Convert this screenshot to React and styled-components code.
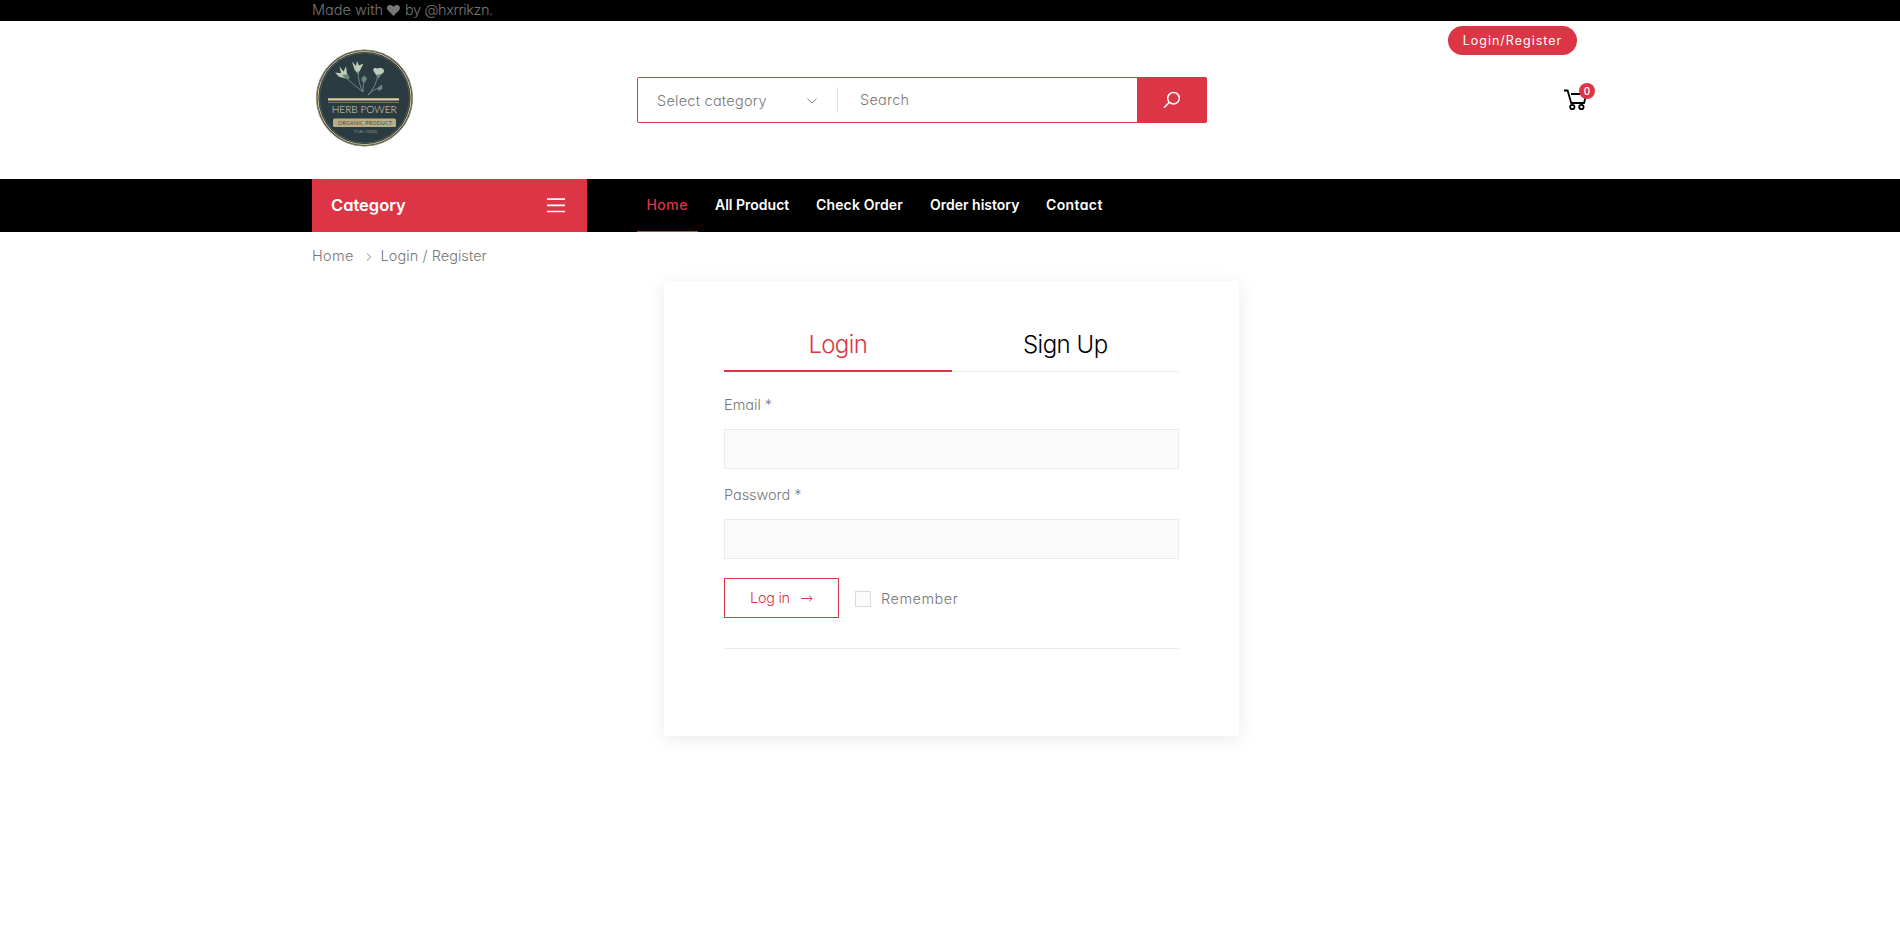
import React from "react";
import styled, { createGlobalStyle } from "styled-components";

const red = "#dc3545";

const GlobalStyle = createGlobalStyle`
  *, *::before, *::after { box-sizing: border-box; }
  body {
    margin: 0;
    background: #fff;
    color: #777;
    font: 300 14.5px/24px Inter, "Open Sans", sans-serif;
    font-feature-settings: "cv11", "ss03";
  }
  button, input { font: inherit; font-feature-settings: inherit; }
`;

const Page = styled.div`
  min-height: 100vh;
`;

const Label = styled.span`
  display: inline-block;
  white-space: nowrap;
  letter-spacing: ${(p) => p.$track || 0}px;
`;

const Container = styled.div`
  width: 1283px;
  height: 100%;
  margin-left: 312px;
  display: flex;
`;

const TopBar = styled.div`
  height: 21px;
  background: #000;
`;

const Credit = styled(Container)`
  align-items: center;
  line-height: 20px;
  padding-bottom: 1px;
  svg { margin: 0 5px 0 4px; }
`;

const Header = styled.header`
  height: 158px;
`;

const Logo = styled.svg`
  flex: none;
  width: 106px;
  height: 106px;
  margin-top: 24px;
`;

const SearchForm = styled.div`
  display: flex;
  flex: none;
  width: 570px;
  height: 46px;
  margin: 56px 0 0 219px;
  border: 1px solid ${red};
  border-radius: 2px;
`;

const Select = styled.div`
  display: flex;
  align-items: center;
  justify-content: space-between;
  width: 200px;
  height: 26px;
  margin-top: 9px;
  padding: 2px 20px 0 19px;
  border-right: 1px solid #e5e5e5;
`;

const SearchText = styled.div`
  flex: 1;
  padding: 10px 0 0 22px;
`;

const SearchButton = styled.button`
  display: grid;
  place-items: center;
  width: 70px;
  height: 46px;
  margin: -1px -1px 0 0;
  padding: 0;
  border: 0;
  border-radius: 0 2px 2px 0;
  background: ${red};
`;

const Account = styled.div`
  display: flex;
  flex-direction: column;
  align-items: flex-end;
  width: 147px;
  margin: 5px 0 0 241px;
`;

const Pill = styled.button`
  width: 129px;
  height: 29px;
  margin-right: 18px;
  padding: 0;
  border: 0;
  border-radius: 15px;
  background: ${red};
  color: #fff;
  font-size: 12.5px;
  font-weight: 400;
  line-height: 29px;
`;

const Cart = styled.div`
  position: relative;
  width: 31px;
  height: 28px;
  margin-top: 28px;
  svg { display: block; margin-top: 6px; }
`;

const Badge = styled.span`
  position: absolute;
  top: 0;
  right: 0;
  width: 16px;
  height: 16px;
  border-radius: 50%;
  background: ${red};
  color: #fff;
  font-size: 10px;
  font-weight: 500;
  line-height: 16px;
  text-align: center;
`;

const NavBar = styled.nav`
  height: 53px;
  background: #000;
`;

const Category = styled.div`
  display: flex;
  align-items: center;
  justify-content: space-between;
  width: 275px;
  height: 53px;
  margin-right: 50px;
  padding: 0 22px 0 19px;
  background: ${red};
  color: #fff;
  font-size: 16.5px;
  font-weight: 600;
  span { padding-bottom: 1px; }
`;

const NavItem = styled.div`
  width: ${(p) => p.$width}px;
  height: 53px;
  margin-right: 6px;
  padding-left: ${(p) => (p.$active ? 9.5 : 11)}px;
  border-bottom: 1px solid ${(p) => (p.$active ? red : "transparent")};
  color: ${(p) => (p.$active ? red : "#fff")};
  font-weight: ${(p) => (p.$active ? 500 : 600)};
  font-size: 14px;
  line-height: 52px;
`;

const Breadcrumb = styled(Container)`
  height: 49px;
  align-items: center;
  padding-bottom: 1px;
  svg { margin: 2px 9px 0 12px; }
`;

const Card = styled.main`
  width: 575px;
  height: 455px;
  margin-left: 664px;
  padding: 40px 60px 0;
  background: #fff;
  box-shadow: 0 3px 16px rgba(51, 51, 51, 0.1);
`;

const Tabs = styled.div`
  display: flex;
  height: 51px;
  border-bottom: 1px solid #ebebeb;
`;

const Tab = styled.div`
  flex: 1;
  height: 51px;
  border-bottom: ${(p) => (p.$active ? `2px solid ${red}` : "0")};
  color: ${(p) => (p.$active ? red : "#000")};
  font-size: 24px;
  font-weight: 350;
  line-height: 47px;
  text-align: center;
`;

const Field = styled.label`
  display: block;
  height: 90px;
  padding-top: 21px;
`;

const Input = styled.input`
  display: block;
  width: 100%;
  height: 40px;
  margin-top: 12px;
  border: 1px solid #ebebeb;
  background: #fafafa;
`;

const Actions = styled.div`
  display: flex;
  align-items: center;
  height: 71px;
  margin-top: 26px;
  padding-bottom: 31px;
  border-bottom: 1px solid #ebebeb;
`;

const LoginButton = styled.button`
  display: flex;
  align-items: center;
  width: 115px;
  height: 40px;
  padding: 0 0 0 25px;
  border: 1px solid ${red};
  background: transparent;
  color: ${red};
  svg { margin: 1px 0 0 11px; }
`;

const Remember = styled.label`
  display: flex;
  align-items: center;
  padding-top: 2px;
`;

const CheckBox = styled.span`
  width: 16px;
  height: 16px;
  margin: 0 10px 0 16px;
  border: 1px solid #dadada;
  background: #fafafa;
`;

const LogoArt = () => (
  <Logo viewBox="0 0 106 106">
    <circle cx="52.5" cy="53" r="48.1" fill="#2b3b42" stroke="#8f8b72" strokeWidth="1" />
    <circle cx="52.5" cy="53" r="46.6" fill="none" stroke="#d6c894" strokeWidth="1" />
    <circle cx="52.5" cy="53" r="45" fill="none" stroke="#686d60" strokeWidth="0.6" />
    <path
      d="M32 31Q42 40 51 47M46 25Q46 38 51 47M52 36Q51 42 51 47M66 29Q64 42 56 50M67 43Q61 44 56 50"
      fill="none"
      stroke="#7f9c90"
      strokeWidth="0.8"
    />
    <g fill="#bdcdb8">
      <path d="M23 27.5l6 .8-1.5-6.8 4 5 2.5-5.2 1 7.5 2 3-4 1.5-6-1.5z" />
      <path d="M40 16.5l4 4.5 1-5 2 4.5 4.5-2-3.5 7-2.5 3-3-4z" />
      <path d="M61 25l1.500-2.300 3 .8 3-.8 3 1.300.5 3-3.500 3-1 2-3.500-2z" />
    </g>
    <g fill="#668b7a">
      <path d="M30 30l6-1 2 4.500-4 .5zM44.500 27l3-1-1 4zM64 30l5-1-2.500 5zM49.500 33l3-2.500 2.500 3-2 4-3-1zM65 43l5-3.500 .5 4-3.500 2.500z" />
    </g>
    <path d="M16 54.4H87" stroke="#e1cd99" strokeWidth="2.2" />
    <path d="M16 57.4H87" stroke="#928d70" strokeWidth="0.8" />
    <text x="19.7" y="68" textLength="65" fontSize="10.2" fontFamily="Lato, sans-serif" fontWeight="300" fill="#e2d8b2">HERB POWER</text>
    <rect x="21" y="73.5" width="63" height="8.500" rx="1.5" fill="#b9af86" />
    <text x="26" y="79.6" textLength="54" fontSize="5.2" fontFamily="Lato, sans-serif" fontWeight="400" fill="#39443f">ORGANIC PRODUCT</text>
    <text x="42" y="87.5" textLength="23" fontSize="4" fontFamily="Lato, sans-serif" fill="#d0ccb0">THAI HERBS</text>
  </Logo>
);

const NAV = [
  ["Home", 61, 0.45],
  ["All Product", 95, 0],
  ["Check Order", 108, 0.14],
  ["Order history", 110, 0],
  ["Contact", 80, 0.38],
];

export default function App() {
  return (
    <Page>
      <GlobalStyle />
      <TopBar>
        <Credit>
          <Label>Made with</Label>
          <svg width="13" height="11" viewBox="0 0 13 11" fill="#777">
            <path d="M6.5 11L1.1 5.6C-.6 3.8-.2 1.4 1.4.5 3-.4 5 0 6.5 1.7 8 0 10-.4 11.6.5c1.6.9 2 3.3.3 5.1z" />
          </svg>
          <Label $track={-0.42}>by @hxrrikzn.</Label>
        </Credit>
      </TopBar>
      <Header>
        <Container>
          <LogoArt />
          <SearchForm>
            <Select>
              <Label $track={0.24}>Select category</Label>
              <svg width="10" height="6" viewBox="0 0 10 6" fill="none" stroke="#888"><path d="M.4.5L5 5 9.6.5" /></svg>
            </Select>
            <SearchText><Label $track={0.25}>Search</Label></SearchText>
            <SearchButton aria-label="Search">
              <svg width="18" height="18" viewBox="0 0 18 18" fill="none" stroke="#fff" strokeWidth="1.5">
                <circle cx="10.5" cy="7.2" r="5.8" /><path d="M6.4 11.3L1 16.8" />
              </svg>
            </SearchButton>
          </SearchForm>
          <Account>
            <Pill><Label $track={1}>Login/Register</Label></Pill>
            <Cart>
              <svg width="24" height="22" viewBox="0 0 24 22" fill="none" stroke="#000" strokeWidth="1.8">
                <path d="M0 1.5H3.6L7.2 14H20L22 7M7 5H16" />
                <circle cx="8.3" cy="18" r="2.2" /><circle cx="17.4" cy="18" r="2.2" />
              </svg>
              <Badge>0</Badge>
            </Cart>
          </Account>
        </Container>
      </Header>
      <NavBar>
        <Container>
          <Category>
            <Label>Category</Label>
            <svg width="18" height="15" viewBox="0 0 18 15" stroke="#fff" strokeWidth="1.7"><path d="M0 1.2H18M0 7.4H18M0 13.5H18" /></svg>
          </Category>
          {NAV.map(([name, width, track], i) => (
            <NavItem key={name} $width={width} $active={i === 0}><Label $track={track}>{name}</Label></NavItem>
          ))}
        </Container>
      </NavBar>
      <Breadcrumb>
        <Label $track={0.3}>Home</Label>
        <svg width="6" height="8" viewBox="0 0 6 8" fill="none" stroke="#888"><path d="M1 .4L4.7 4 1 7.6" /></svg>
        <Label $track={0.05}>Login / Register</Label>
      </Breadcrumb>
      <Card>
        <Tabs>
          <Tab $active><Label $track={-0.65}>Login</Label></Tab>
          <Tab><Label $track={-0.5}>Sign Up</Label></Tab>
        </Tabs>
        <Field><Label>Email *</Label><Input /></Field>
        <Field><Label $track={-0.05}>Password *</Label><Input type="password" /></Field>
        <Actions>
          <LoginButton>
            <Label $track={-0.3}>Log in</Label>
            <svg width="12" height="7" viewBox="0 0 12 7" fill="none" stroke={red}><path d="M0 3.5H11M8.2.7L11 3.5 8.2 6.3" /></svg>
          </LoginButton>
          <Remember>
            <CheckBox />
            <Label $track={0.5}>Remember</Label>
          </Remember>
        </Actions>
      </Card>
    </Page>
  );
}
